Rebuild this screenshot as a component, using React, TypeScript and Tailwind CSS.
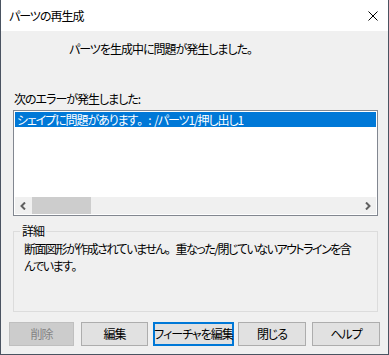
import React from "react";

const font = "font-['Noto_Sans_CJK_JP','Noto_Sans',sans-serif] [font-feature-settings:'palt'] tracking-[-1px]";

function M() {
  return <span className="[font-feature-settings:normal]">。</span>;
}

function Btn({ label, w, disabled, focused }: { label: string; w: string; disabled?: boolean; focused?: boolean }) {
  let cls = "h-[24px] flex items-center justify-center text-[12px] leading-none whitespace-nowrap ";
  if (disabled) cls += "bg-[#cccccc] border border-[#bfbfbf] text-[#838383]";
  else if (focused) cls += "bg-[#e1e1e1] border-2 border-[#0078d7] text-black";
  else cls += "bg-[#e1e1e1] border border-[#adadad] text-black";
  return <div className={cls + " " + w}>{label}</div>;
}

export default function App() {
  return (
    <div className={"w-[389px] h-[355px] bg-[#f0f0f0] border-l border-r border-b border-[#4a5361] flex flex-col " + font}>
      <div className="h-[31px] bg-white flex items-center justify-between pl-[8px] pr-[9px] shrink-0">
        <span className="text-[12px] text-black">パーツの再生成</span>
        <svg width="10" height="10" viewBox="0 0 10 10" className="mr-[1px]">
          <path d="M0.5 0.5 L9.5 9.5 M9.5 0.5 L0.5 9.5" stroke="#000" strokeWidth="1" />
        </svg>
      </div>
      <div className="pl-[12px] pr-[10px] flex flex-col">
        <div className="mt-[10px] pl-[56px] text-[12px] leading-[16px] text-black">パーツを生成中に問題が発生しました<M /></div>
        <div className="mt-[34px] pl-[1px] text-[12px] leading-[16px] text-black">次のエラーが発生しました:</div>
        <div className="mt-[3px] h-[106px] border border-[#828790] bg-white flex flex-col p-[1px]">
          <div className="h-[15px] bg-[#0078d7] text-white text-[12px] leading-[15px] pl-[2px] whitespace-nowrap tracking-[-1.1px]">
            シェイプに問題があります<M /><span className="[font-feature-settings:normal] tracking-normal">: </span>/パーツ1/押し出し1
          </div>
          <div className="flex-1" />
          <div className="h-[17px] bg-[#f0f0f0] flex items-center">
            <div className="w-[17px] h-[17px] flex items-center justify-center">
              <svg width="7" height="8" viewBox="0 0 7 8"><path d="M5 0.5 L1.5 4 L5 7.5" stroke="#606060" strokeWidth="2" fill="none" /></svg>
            </div>
            <div className="w-[59px] h-[17px] bg-[#cdcdcd]" />
            <div className="flex-1" />
            <div className="w-[17px] h-[17px] flex items-center justify-center">
              <svg width="7" height="8" viewBox="0 0 7 8"><path d="M2 0.5 L5.5 4 L2 7.5" stroke="#606060" strokeWidth="2" fill="none" /></svg>
            </div>
          </div>
        </div>
        <div className="relative mt-[15px] h-[81px] border border-[#dcdcdc] pl-[10px] pr-[4px] pt-[8px]">
          <div className="absolute left-[6px] top-[-9px] px-[2px] bg-[#f0f0f0] text-[12px] leading-[16px] text-black">詳細</div>
          <div className="text-[12px] leading-[17px] text-black whitespace-nowrap tracking-[-1.5px]">
            断面図形が作成されていません<M />重なった/閉じていないアウトラインを含<br />んでいます<M />
          </div>
        </div>
      </div>
      <div className="mt-[10px] pl-[8px] flex">
        <Btn label="削除" w="w-[65px]" disabled />
        <div className="w-[7px]" />
        <Btn label="編集" w="w-[67px]" />
        <div className="w-[5px]" />
        <Btn label="フィーチャを編集" w="w-[81px]" focused />
        <div className="w-[4px]" />
        <Btn label="閉じる" w="w-[68px]" />
        <div className="w-[6px]" />
        <Btn label="ヘルプ" w="w-[68px]" />
      </div>
    </div>
  );
}
